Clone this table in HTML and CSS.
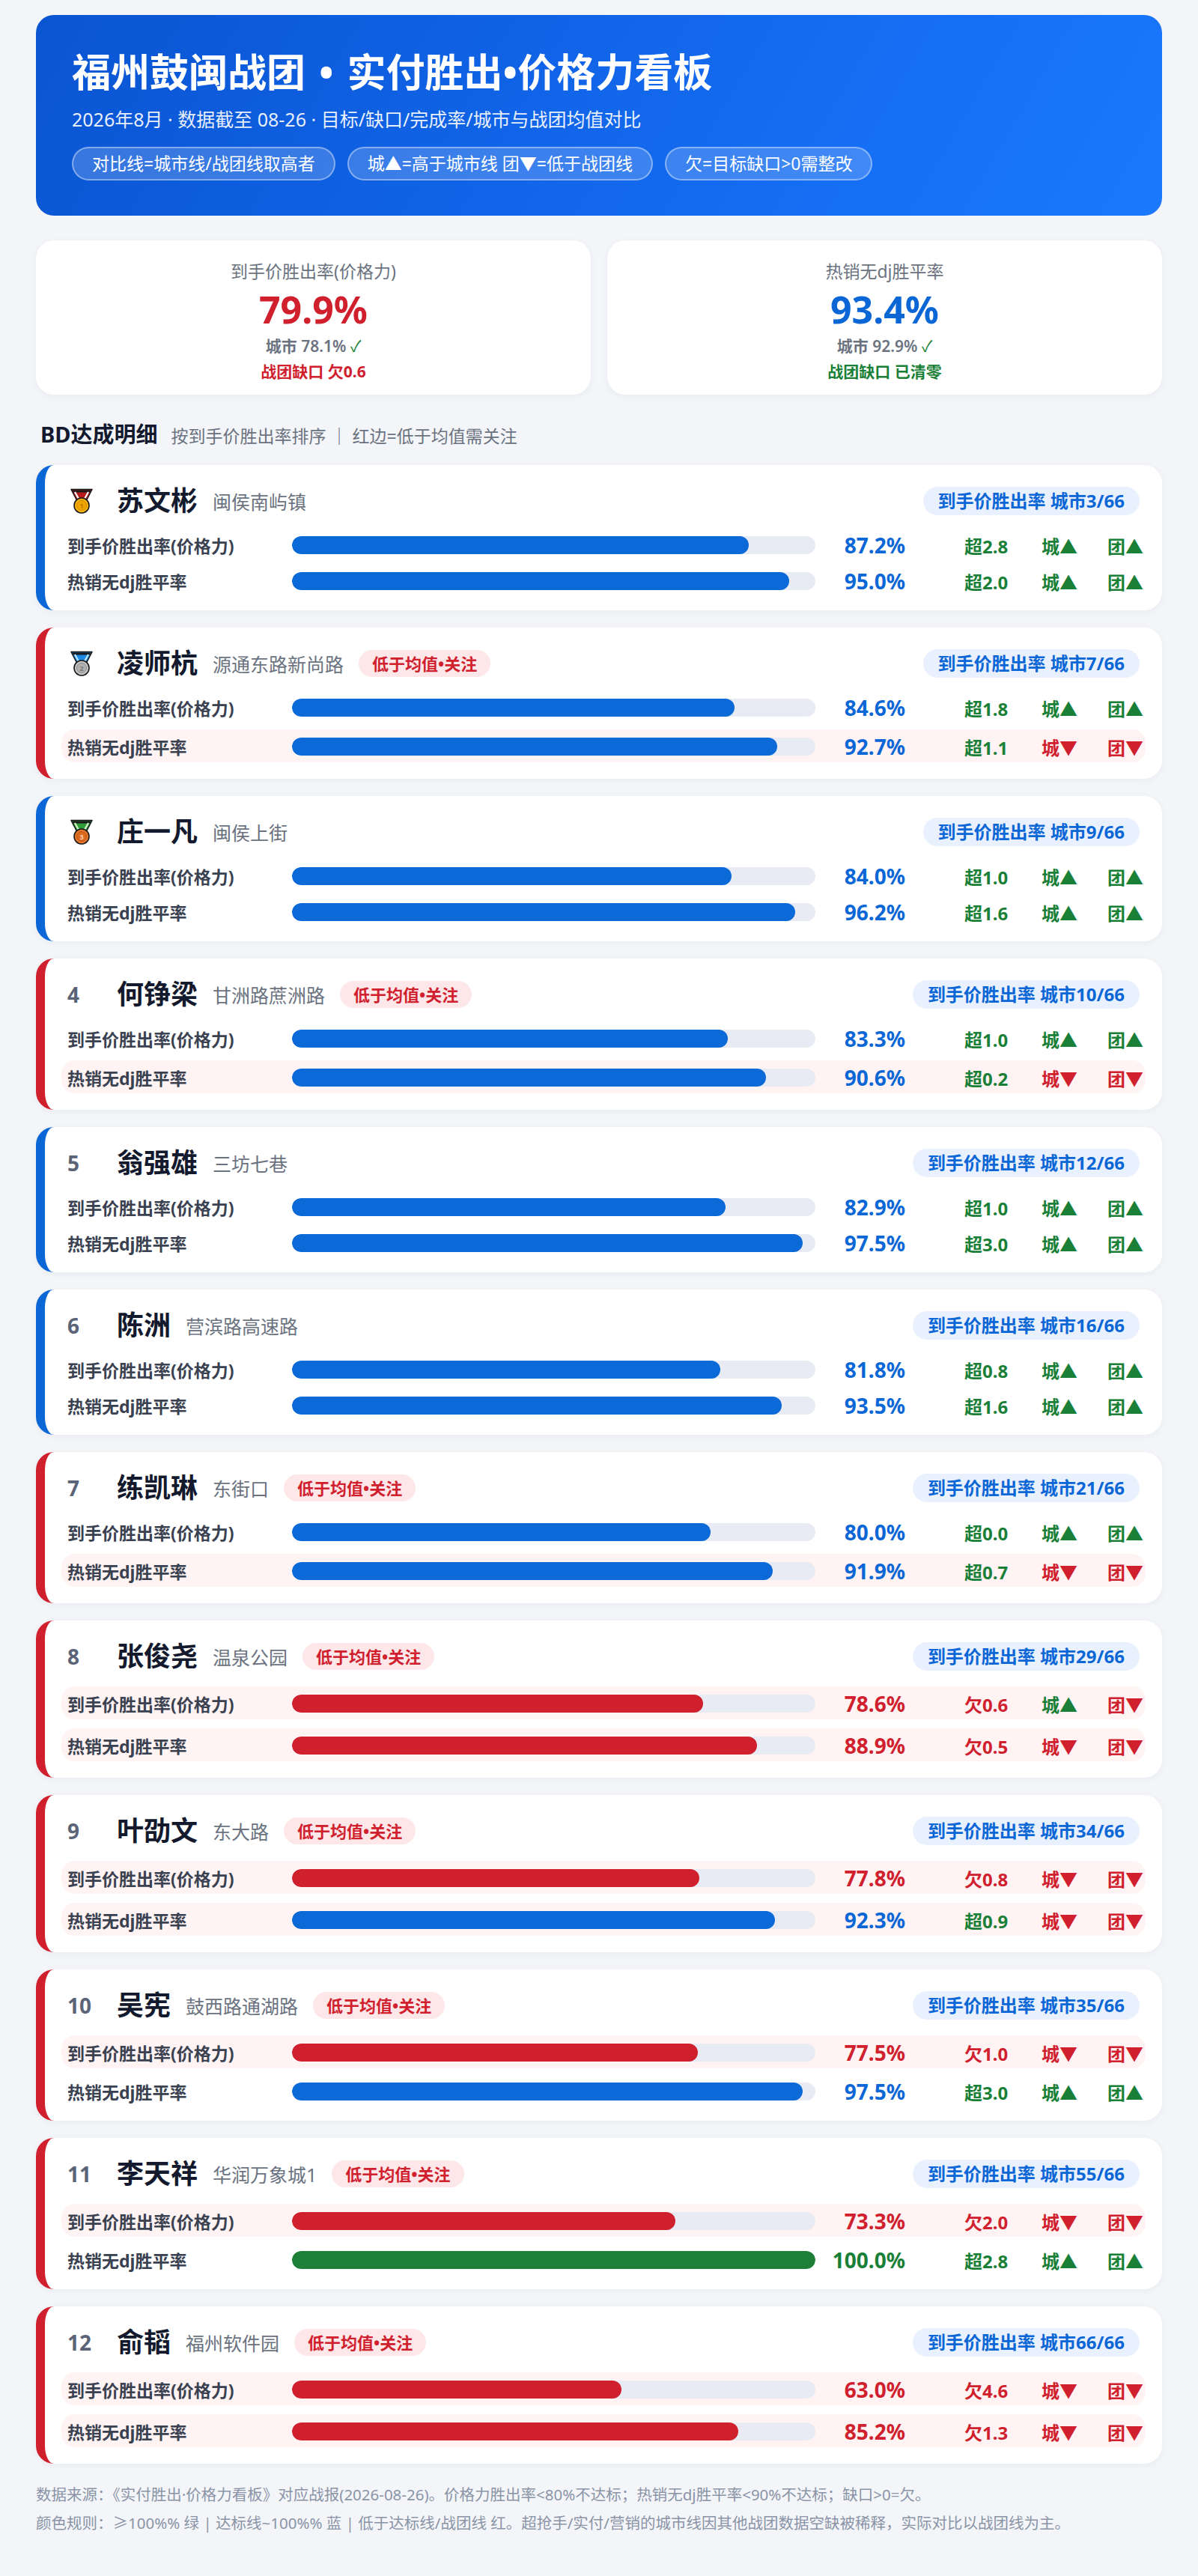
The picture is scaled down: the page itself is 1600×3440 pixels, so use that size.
FILE: index.html
```html
<!DOCTYPE html>
<html lang="zh-CN">
<head>
<meta charset="utf-8">
<title>福州鼓闽战团 · 实付胜出•价格力看板</title>
<link rel="stylesheet" href="styles.css">
</head>
<body>
<div class="page">
  <header class="hero">
    <h1 class="hero-title">福州鼓闽战团<span class="sep">•</span>实付胜出•价格力看板</h1>
    <div class="hero-sub">2026年8月 · 数据截至 08-26 · 目标/缺口/完成率/城市与战团均值对比</div>
    <div class="hero-pills">
      <span class="pill">对比线=城市线/战团线取高者</span>
      <span class="pill">城▲=高于城市线 团▼=低于战团线</span>
      <span class="pill">欠=目标缺口&gt;0需整改</span>
    </div>
  </header>

  <section class="stats">
    <div class="stat">
      <div class="stat-label">到手价胜出率(价格力)</div>
      <div class="stat-value red">79.9%</div>
      <div class="stat-city">城市 78.1% <span class="ok">✓</span></div>
      <div class="stat-gap red">战团缺口 欠0.6</div>
    </div>
    <div class="stat">
      <div class="stat-label">热销无dj胜平率</div>
      <div class="stat-value blue">93.4%</div>
      <div class="stat-city">城市 92.9% <span class="ok">✓</span></div>
      <div class="stat-gap green">战团缺口 已清零</div>
    </div>
  </section>

  <div class="sec-head">
    <span class="sec-title">BD达成明细</span>
    <span class="sec-note">按到手价胜出率排序 ｜ 红边=低于均值需关注</span>
  </div>

  <div class="cards">
    <!-- 1 -->
    <div class="card good">
      <div class="card-head">
        <span class="rank"><svg class="medal" viewBox="0 0 36 36" width="36" height="36"><path d="M4 2.5 H32 L24.5 17 H11.5 Z" fill="#b71c1c" stroke="#1a1a1a" stroke-width="1.6" stroke-linejoin="round"/><path d="M5.5 3.5 H30.5 L29 6.5 H7 Z" fill="#1a1a1a"/><path d="M9 6 L14.5 16" stroke="#fff" stroke-width="2.2"/><path d="M27 6 L21.5 16" stroke="#fff" stroke-width="2.2"/><circle cx="18" cy="24" r="10" fill="#f6b40e" stroke="#1a1a1a" stroke-width="1.6"/><circle cx="18" cy="24" r="6.5" fill="#eea500" stroke="#d48800" stroke-width="1"/><text x="18" y="27.5" text-anchor="middle" class="medal-num" fill="#c27400">1</text></svg></span>
        <span class="name">苏文彬</span>
        <span class="loc">闽侯南屿镇</span>
        <span class="badge">到手价胜出率 城市3/66</span>
      </div>
      <div class="rows">
        <div class="row"><span class="label">到手价胜出率(价格力)</span><span class="track"><span class="fill blue-bg" style="width:87.2%"></span></span><span class="val blue">87.2%</span><span class="delta green">超2.8</span><span class="cmp green">城▲</span><span class="cmp green">团▲</span></div>
        <div class="row"><span class="label">热销无dj胜平率</span><span class="track"><span class="fill blue-bg" style="width:95%"></span></span><span class="val blue">95.0%</span><span class="delta green">超2.0</span><span class="cmp green">城▲</span><span class="cmp green">团▲</span></div>
      </div>
    </div>
    <!-- 2 -->
    <div class="card warn">
      <div class="card-head">
        <span class="rank"><svg class="medal" viewBox="0 0 36 36" width="36" height="36"><path d="M4 2.5 H32 L24.5 17 H11.5 Z" fill="#1e88e5" stroke="#1a1a1a" stroke-width="1.6" stroke-linejoin="round"/><path d="M5.5 3.5 H30.5 L29 6.5 H7 Z" fill="#1a1a1a"/><path d="M9 6 L14.5 16" stroke="#bfe6ff" stroke-width="2.2"/><path d="M27 6 L21.5 16" stroke="#bfe6ff" stroke-width="2.2"/><circle cx="18" cy="24" r="10" fill="#c4c4c4" stroke="#1a1a1a" stroke-width="1.6"/><circle cx="18" cy="24" r="6.5" fill="#b0b0b0" stroke="#8e8e8e" stroke-width="1"/><text x="18" y="27.5" text-anchor="middle" class="medal-num" fill="#7a7a7a">2</text></svg></span>
        <span class="name">凌师杭</span>
        <span class="loc">源通东路新尚路</span>
        <span class="tag">低于均值•关注</span>
        <span class="badge">到手价胜出率 城市7/66</span>
      </div>
      <div class="rows">
        <div class="row"><span class="label">到手价胜出率(价格力)</span><span class="track"><span class="fill blue-bg" style="width:84.6%"></span></span><span class="val blue">84.6%</span><span class="delta green">超1.8</span><span class="cmp green">城▲</span><span class="cmp green">团▲</span></div>
        <div class="row hl"><span class="label">热销无dj胜平率</span><span class="track"><span class="fill blue-bg" style="width:92.7%"></span></span><span class="val blue">92.7%</span><span class="delta green">超1.1</span><span class="cmp red">城▼</span><span class="cmp red">团▼</span></div>
      </div>
    </div>
    <!-- 3 -->
    <div class="card good">
      <div class="card-head">
        <span class="rank"><svg class="medal" viewBox="0 0 36 36" width="36" height="36"><path d="M4 2.5 H32 L24.5 17 H11.5 Z" fill="#2e9d3a" stroke="#1a1a1a" stroke-width="1.6" stroke-linejoin="round"/><path d="M5.5 3.5 H30.5 L29 6.5 H7 Z" fill="#1a1a1a"/><path d="M9 6 L14.5 16" stroke="#d8f5c8" stroke-width="2.2"/><path d="M27 6 L21.5 16" stroke="#d8f5c8" stroke-width="2.2"/><circle cx="18" cy="24" r="10" fill="#e9782d" stroke="#1a1a1a" stroke-width="1.6"/><circle cx="18" cy="24" r="6.5" fill="#dc6a1f" stroke="#b85515" stroke-width="1"/><text x="18" y="27.5" text-anchor="middle" class="medal-num" fill="#ffd2ae">3</text></svg></span>
        <span class="name">庄一凡</span>
        <span class="loc">闽侯上街</span>
        <span class="badge">到手价胜出率 城市9/66</span>
      </div>
      <div class="rows">
        <div class="row"><span class="label">到手价胜出率(价格力)</span><span class="track"><span class="fill blue-bg" style="width:84%"></span></span><span class="val blue">84.0%</span><span class="delta green">超1.0</span><span class="cmp green">城▲</span><span class="cmp green">团▲</span></div>
        <div class="row"><span class="label">热销无dj胜平率</span><span class="track"><span class="fill blue-bg" style="width:96.2%"></span></span><span class="val blue">96.2%</span><span class="delta green">超1.6</span><span class="cmp green">城▲</span><span class="cmp green">团▲</span></div>
      </div>
    </div>
    <!-- 4 -->
    <div class="card warn">
      <div class="card-head">
        <span class="rank">4</span>
        <span class="name">何铮梁</span>
        <span class="loc">甘洲路蔗洲路</span>
        <span class="tag">低于均值•关注</span>
        <span class="badge">到手价胜出率 城市10/66</span>
      </div>
      <div class="rows">
        <div class="row"><span class="label">到手价胜出率(价格力)</span><span class="track"><span class="fill blue-bg" style="width:83.3%"></span></span><span class="val blue">83.3%</span><span class="delta green">超1.0</span><span class="cmp green">城▲</span><span class="cmp green">团▲</span></div>
        <div class="row hl"><span class="label">热销无dj胜平率</span><span class="track"><span class="fill blue-bg" style="width:90.6%"></span></span><span class="val blue">90.6%</span><span class="delta green">超0.2</span><span class="cmp red">城▼</span><span class="cmp red">团▼</span></div>
      </div>
    </div>
    <!-- 5 -->
    <div class="card good">
      <div class="card-head">
        <span class="rank">5</span>
        <span class="name">翁强雄</span>
        <span class="loc">三坊七巷</span>
        <span class="badge">到手价胜出率 城市12/66</span>
      </div>
      <div class="rows">
        <div class="row"><span class="label">到手价胜出率(价格力)</span><span class="track"><span class="fill blue-bg" style="width:82.9%"></span></span><span class="val blue">82.9%</span><span class="delta green">超1.0</span><span class="cmp green">城▲</span><span class="cmp green">团▲</span></div>
        <div class="row"><span class="label">热销无dj胜平率</span><span class="track"><span class="fill blue-bg" style="width:97.5%"></span></span><span class="val blue">97.5%</span><span class="delta green">超3.0</span><span class="cmp green">城▲</span><span class="cmp green">团▲</span></div>
      </div>
    </div>
    <!-- 6 -->
    <div class="card good">
      <div class="card-head">
        <span class="rank">6</span>
        <span class="name">陈洲</span>
        <span class="loc">营滨路高速路</span>
        <span class="badge">到手价胜出率 城市16/66</span>
      </div>
      <div class="rows">
        <div class="row"><span class="label">到手价胜出率(价格力)</span><span class="track"><span class="fill blue-bg" style="width:81.8%"></span></span><span class="val blue">81.8%</span><span class="delta green">超0.8</span><span class="cmp green">城▲</span><span class="cmp green">团▲</span></div>
        <div class="row"><span class="label">热销无dj胜平率</span><span class="track"><span class="fill blue-bg" style="width:93.5%"></span></span><span class="val blue">93.5%</span><span class="delta green">超1.6</span><span class="cmp green">城▲</span><span class="cmp green">团▲</span></div>
      </div>
    </div>
    <!-- 7 -->
    <div class="card warn">
      <div class="card-head">
        <span class="rank">7</span>
        <span class="name">练凯琳</span>
        <span class="loc">东街口</span>
        <span class="tag">低于均值•关注</span>
        <span class="badge">到手价胜出率 城市21/66</span>
      </div>
      <div class="rows">
        <div class="row"><span class="label">到手价胜出率(价格力)</span><span class="track"><span class="fill blue-bg" style="width:80%"></span></span><span class="val blue">80.0%</span><span class="delta green">超0.0</span><span class="cmp green">城▲</span><span class="cmp green">团▲</span></div>
        <div class="row hl"><span class="label">热销无dj胜平率</span><span class="track"><span class="fill blue-bg" style="width:91.9%"></span></span><span class="val blue">91.9%</span><span class="delta green">超0.7</span><span class="cmp red">城▼</span><span class="cmp red">团▼</span></div>
      </div>
    </div>
    <!-- 8 -->
    <div class="card warn">
      <div class="card-head">
        <span class="rank">8</span>
        <span class="name">张俊尧</span>
        <span class="loc">温泉公园</span>
        <span class="tag">低于均值•关注</span>
        <span class="badge">到手价胜出率 城市29/66</span>
      </div>
      <div class="rows">
        <div class="row hl"><span class="label">到手价胜出率(价格力)</span><span class="track"><span class="fill red-bg" style="width:78.6%"></span></span><span class="val red">78.6%</span><span class="delta red">欠0.6</span><span class="cmp green">城▲</span><span class="cmp red">团▼</span></div>
        <div class="row hl"><span class="label">热销无dj胜平率</span><span class="track"><span class="fill red-bg" style="width:88.9%"></span></span><span class="val red">88.9%</span><span class="delta red">欠0.5</span><span class="cmp red">城▼</span><span class="cmp red">团▼</span></div>
      </div>
    </div>
    <!-- 9 -->
    <div class="card warn">
      <div class="card-head">
        <span class="rank">9</span>
        <span class="name">叶劭文</span>
        <span class="loc">东大路</span>
        <span class="tag">低于均值•关注</span>
        <span class="badge">到手价胜出率 城市34/66</span>
      </div>
      <div class="rows">
        <div class="row hl"><span class="label">到手价胜出率(价格力)</span><span class="track"><span class="fill red-bg" style="width:77.8%"></span></span><span class="val red">77.8%</span><span class="delta red">欠0.8</span><span class="cmp red">城▼</span><span class="cmp red">团▼</span></div>
        <div class="row hl"><span class="label">热销无dj胜平率</span><span class="track"><span class="fill blue-bg" style="width:92.3%"></span></span><span class="val blue">92.3%</span><span class="delta green">超0.9</span><span class="cmp red">城▼</span><span class="cmp red">团▼</span></div>
      </div>
    </div>
    <!-- 10 -->
    <div class="card warn">
      <div class="card-head">
        <span class="rank">10</span>
        <span class="name">吴宪</span>
        <span class="loc">鼓西路通湖路</span>
        <span class="tag">低于均值•关注</span>
        <span class="badge">到手价胜出率 城市35/66</span>
      </div>
      <div class="rows">
        <div class="row hl"><span class="label">到手价胜出率(价格力)</span><span class="track"><span class="fill red-bg" style="width:77.5%"></span></span><span class="val red">77.5%</span><span class="delta red">欠1.0</span><span class="cmp red">城▼</span><span class="cmp red">团▼</span></div>
        <div class="row"><span class="label">热销无dj胜平率</span><span class="track"><span class="fill blue-bg" style="width:97.5%"></span></span><span class="val blue">97.5%</span><span class="delta green">超3.0</span><span class="cmp green">城▲</span><span class="cmp green">团▲</span></div>
      </div>
    </div>
    <!-- 11 -->
    <div class="card warn">
      <div class="card-head">
        <span class="rank">11</span>
        <span class="name">李天祥</span>
        <span class="loc">华润万象城1</span>
        <span class="tag">低于均值•关注</span>
        <span class="badge">到手价胜出率 城市55/66</span>
      </div>
      <div class="rows">
        <div class="row hl"><span class="label">到手价胜出率(价格力)</span><span class="track"><span class="fill red-bg" style="width:73.3%"></span></span><span class="val red">73.3%</span><span class="delta red">欠2.0</span><span class="cmp red">城▼</span><span class="cmp red">团▼</span></div>
        <div class="row"><span class="label">热销无dj胜平率</span><span class="track"><span class="fill green-bg" style="width:100%"></span></span><span class="val green">100.0%</span><span class="delta green">超2.8</span><span class="cmp green">城▲</span><span class="cmp green">团▲</span></div>
      </div>
    </div>
    <!-- 12 -->
    <div class="card warn">
      <div class="card-head">
        <span class="rank">12</span>
        <span class="name">俞韬</span>
        <span class="loc">福州软件园</span>
        <span class="tag">低于均值•关注</span>
        <span class="badge">到手价胜出率 城市66/66</span>
      </div>
      <div class="rows">
        <div class="row hl"><span class="label">到手价胜出率(价格力)</span><span class="track"><span class="fill red-bg" style="width:63%"></span></span><span class="val red">63.0%</span><span class="delta red">欠4.6</span><span class="cmp red">城▼</span><span class="cmp red">团▼</span></div>
        <div class="row hl"><span class="label">热销无dj胜平率</span><span class="track"><span class="fill red-bg" style="width:85.2%"></span></span><span class="val red">85.2%</span><span class="delta red">欠1.3</span><span class="cmp red">城▼</span><span class="cmp red">团▼</span></div>
      </div>
    </div>
  </div>

  <footer class="foot">
    <div>数据来源：《实付胜出·价格力看板》对应战报(2026-08-26)。价格力胜出率&lt;80%不达标；热销无dj胜平率&lt;90%不达标；缺口&gt;0=欠。</div>
    <div>颜色规则：≥100%% 绿 | 达标线~100%% 蓝 | 低于达标线/战团线 红。超抢手/实付/营销的城市线因其他战团数据空缺被稀释，实际对比以战团线为主。</div>
  </footer>
</div>
</body>
</html>
```

FILE: styles.css
```css
* { box-sizing: border-box; }
html, body { margin: 0; padding: 0; }
body {
  background: #f3f5f9;
  font-family: "Noto Sans", "Noto Sans CJK SC", sans-serif;
  color: #1f2937;
}
.page {
  padding: 20px 48px 40px;
  display: flex;
  flex-direction: column;
}

/* hero */
.hero {
  border-radius: 24px;
  background: linear-gradient(120deg, #0a55d2 0%, #1266ea 50%, #1a79ff 100%);
  padding: 44px 48px 47px;
  color: #fff;
}
.hero-title {
  margin: 0;
  font-size: 52px;
  line-height: 64px;
  font-weight: 700;
  white-space: nowrap;
}
.hero-title .sep {
  margin: 0 18px;
}
.hero-sub {
  margin-top: 14px;
  font-size: 25px;
  line-height: 34px;
  color: rgba(255,255,255,0.92);
}
.hero-pills {
  margin-top: 20px;
  display: flex;
  gap: 16px;
}
.pill {
  height: 45px;
  line-height: 41px;
  padding: 0 25px;
  border-radius: 23px;
  border: 2px solid rgba(255,255,255,0.38);
  background: rgba(255,255,255,0.18);
  font-size: 23px;
  color: #fff;
}

/* stats */
.stats {
  margin-top: 33px;
  display: grid;
  grid-template-columns: 1fr 1fr;
  gap: 22px;
}
.stat {
  background: #fff;
  border-radius: 24px;
  box-shadow: 0 2px 10px rgba(20,30,60,0.05);
  padding: 24px 20px 16px;
  text-align: center;
}
.stat-label {
  font-size: 23px;
  line-height: 34px;
  color: #6b7280;
}
.stat-value {
  margin-top: 4px;
  font-size: 50px;
  line-height: 60px;
  font-weight: 700;
}
.stat-city {
  margin-top: 4px;
  font-size: 21px;
  line-height: 30px;
  font-weight: 600;
  color: #6b7280;
}
.stat-city .ok { color: #1a7f37; font-weight: 400; }
.stat-gap {
  margin-top: 4px;
  font-size: 21px;
  line-height: 30px;
  font-weight: 700;
}

.red { color: #d0202e; }
.blue { color: #0b66d6; }
.green { color: #1a7f37; }

/* section head */
.sec-head {
  margin-top: 33px;
  padding-left: 6px;
  display: flex;
  align-items: baseline;
  gap: 18px;
  line-height: 40px;
}
.sec-title {
  font-size: 29px;
  font-weight: 700;
  color: #141a2e;
}
.sec-note {
  font-size: 23px;
  color: #6b7280;
}

/* cards */
.cards {
  margin-top: 19px;
  display: flex;
  flex-direction: column;
  gap: 23px;
}
.card {
  background: #fff;
  border-radius: 24px;
  border-left: 12px solid #0b66d6;
  box-shadow: 0 2px 10px rgba(20,30,60,0.05);
  padding: 28px 30px 22px 30px;
}
.card.warn { border-left-color: #d0202e; }
.card-head {
  display: flex;
  align-items: center;
  gap: 20px;
  min-height: 40px;
}
.rank {
  width: 46px;
  flex: none;
  font-size: 28px;
  font-weight: 700;
  color: #5b6477;
  line-height: 40px;
  display: flex;
  align-items: center;
}
.medal { display: block; margin-left: 1px; }
.medal-num { font-size: 9px; font-weight: 700; font-family: "Noto Sans", sans-serif; }
.name {
  font-size: 36px;
  line-height: 40px;
  font-weight: 700;
  color: #141a2e;
}
.loc {
  font-size: 25px;
  color: #6b7280;
}
.tag {
  height: 36px;
  line-height: 36px;
  padding: 0 18px;
  border-radius: 18px;
  background: #fde7e8;
  color: #d0202e;
  font-size: 22px;
  font-weight: 700;
}
.badge {
  margin-left: auto;
  height: 38px;
  line-height: 38px;
  padding: 0 20px;
  border-radius: 19px;
  background: #e9f1fe;
  color: #0b66d6;
  font-size: 24px;
  font-weight: 700;
}

.rows {
  margin-top: 20px;
  display: flex;
  flex-direction: column;
  gap: 12px;
}
.row {
  display: grid;
  grid-template-columns: 300px 1fr 120px 182px 88px 43px;
  align-items: center;
  height: 36px;
  margin: 0 -8px;
  padding: 0 8px;
  border-radius: 18px;
}
.row.hl {
  height: 44px;
  padding: 4px 8px;
  background: #fff3f3;
}
.label {
  font-size: 23px;
  font-weight: 700;
  color: #3a4150;
  white-space: nowrap;
}
.track {
  display: block;
  height: 24px;
  border-radius: 12px;
  background: #e8ebf3;
  overflow: hidden;
}
.fill {
  display: block;
  height: 100%;
  border-radius: 12px;
}
.blue-bg { background: #0b69d8; }
.red-bg { background: #d0202e; }
.green-bg { background: #1e8038; }
.val {
  text-align: right;
  font-size: 28px;
  font-weight: 700;
}
.delta {
  padding-left: 79px;
  font-size: 24px;
  font-weight: 700;
}
.cmp {
  font-size: 24px;
  font-weight: 700;
  white-space: nowrap;
}

/* footer */
.foot {
  margin-top: 22px;
  font-size: 20.5px;
  line-height: 38px;
  color: #8a94a6;
}
```
